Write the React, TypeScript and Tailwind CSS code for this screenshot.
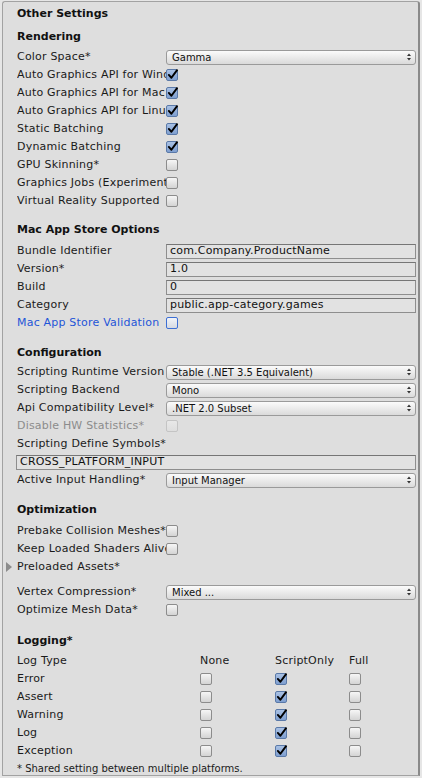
import React from "react";

const FONT = { fontFamily: '"DejaVu Sans", Verdana, sans-serif' };

function Check({ checked = false, tone = "normal" }: { checked?: boolean; tone?: "normal" | "link" | "disabled" }) {
  if (checked) {
    return (
      <span className="relative block h-[12px] w-[12px] shrink-0 rounded-[2px] border border-[#5a79a8] bg-gradient-to-b from-[#a9c1e4] to-[#7f9fd0]">
        <svg viewBox="0 0 12 12" className="absolute -left-px -top-[2px] h-[13px] w-[13px]">
          <path d="M2.6 6.4 L5 9 L10.2 2" fill="none" stroke="#000" strokeWidth="1.8" strokeLinecap="round" strokeLinejoin="round" />
        </svg>
      </span>
    );
  }
  const cls =
    tone === "link"
      ? "border-[#3d6fd4] from-[#f2f4f8] to-[#d6dae2]"
      : tone === "disabled"
        ? "border-[#c4c4c4] from-[#e8e8e8] to-[#dedede]"
        : "border-[#8c8c8c] from-[#f6f6f6] to-[#d4d4d4]";
  return <span className={`block h-[12px] w-[12px] shrink-0 rounded-[2px] border bg-gradient-to-b ${cls}`} />;
}

function Popup({ value }: { value: string }) {
  return (
    <div className="flex h-[15px] w-full items-center justify-between rounded-[3px] border border-[#9a9a9a] bg-gradient-to-b from-[#fbfbfb] to-[#dadada] pl-[5px] pr-[4px] text-[10px] text-[#111]">
      <span className="whitespace-nowrap">{value}</span>
      <svg viewBox="0 0 4 8" className="h-[8px] w-[4px]">
        <path d="M0 3 L2 0.5 L4 3 Z M0 5 L2 7.5 L4 5 Z" fill="#333" />
      </svg>
    </div>
  );
}

function Field({ value }: { value: string }) {
  return (
    <div className="flex h-[15px] w-full items-center border border-[#8e8e8e] border-t-[#767676] bg-[#e2e2e2] pl-[3px] text-[11px] tracking-[0.2px] text-[#111] whitespace-nowrap">
      {value}
    </div>
  );
}

function Row({ label, children, tone = "normal" }: { label: string; children?: React.ReactNode; tone?: "normal" | "link" | "disabled" }) {
  const color = tone === "link" ? "text-[#1f55d8]" : tone === "disabled" ? "text-[#8c8c8c]" : "text-[#1a1a1a]";
  return (
    <div className="flex h-[18px] items-center">
      <div className={`w-[149px] shrink-0 overflow-hidden whitespace-nowrap text-[11px] tracking-[0.2px] ${color}`}>{label}</div>
      <div className="flex flex-1 items-center">{children}</div>
    </div>
  );
}

function Header({ children, className = "" }: { children: React.ReactNode; className?: string }) {
  return <div className={`flex h-[18px] items-center text-[11px] font-bold text-[#111] ${className}`}>{children}</div>;
}

const LOG_ROWS = ["Error", "Assert", "Warning", "Log", "Exception"];

export default function App() {
  return (
    <div className="min-h-screen bg-[#e6e6e6] pl-[2px] pt-px" style={FONT}>
      <div className="h-[775px] w-[418px] rounded-t-[3px] border border-[#a2a2a2] border-r-2 border-r-[#8a8a8a] bg-[#dedede] pl-[14px] pr-[2px] pt-px">
        <Header className="mt-[2px]">Other Settings</Header>

        <Header className="mt-[5px]">Rendering</Header>
        <div className="mt-[2px]">
          <Row label="Color Space*"><Popup value="Gamma" /></Row>
          <Row label="Auto Graphics API for Windows"><Check checked /></Row>
          <Row label="Auto Graphics API for Mac"><Check checked /></Row>
          <Row label="Auto Graphics API for Linux"><Check checked /></Row>
          <Row label="Static Batching"><Check checked /></Row>
          <Row label="Dynamic Batching"><Check checked /></Row>
          <Row label="GPU Skinning*"><Check /></Row>
          <Row label="Graphics Jobs (Experimental)"><Check /></Row>
          <Row label="Virtual Reality Supported"><Check /></Row>
        </div>

        <Header className="mt-[11px]">Mac App Store Options</Header>
        <div className="mt-[3px]">
          <Row label="Bundle Identifier"><Field value="com.Company.ProductName" /></Row>
          <Row label="Version*"><Field value="1.0" /></Row>
          <Row label="Build"><Field value="0" /></Row>
          <Row label="Category"><Field value="public.app-category.games" /></Row>
          <Row label="Mac App Store Validation" tone="link"><Check tone="link" /></Row>
        </div>

        <Header className="mt-[12px]">Configuration</Header>
        <div className="mt-px">
          <Row label="Scripting Runtime Version"><Popup value="Stable (.NET 3.5 Equivalent)" /></Row>
          <Row label="Scripting Backend"><Popup value="Mono" /></Row>
          <Row label="Api Compatibility Level*"><Popup value=".NET 2.0 Subset" /></Row>
          <Row label="Disable HW Statistics*" tone="disabled"><Check tone="disabled" /></Row>
          <div className="flex h-[18px] items-center whitespace-nowrap text-[11px] tracking-[0.2px] text-[#1a1a1a]">Scripting Define Symbols*</div>
          <div className="-ml-px flex h-[18px] items-center">
            <Field value="CROSS_PLATFORM_INPUT" />
          </div>
          <Row label="Active Input Handling*"><Popup value="Input Manager" /></Row>
        </div>

        <Header className="mt-[12px]">Optimization</Header>
        <div className="mt-[3px]">
          <Row label="Prebake Collision Meshes*"><Check /></Row>
          <Row label="Keep Loaded Shaders Alive*"><Check /></Row>
          <div className="relative flex h-[18px] items-center text-[11px] tracking-[0.2px] text-[#1a1a1a]">
            <svg viewBox="0 0 6 10" className="absolute -left-[11px] top-[4px] h-[10px] w-[6px]">
              <path d="M0 0 L6 5 L0 10 Z" fill="#8c8c8c" />
            </svg>
            Preloaded Assets*
          </div>
        </div>
        <div className="mt-[7px]">
          <Row label="Vertex Compression*"><Popup value="Mixed ..." /></Row>
          <Row label="Optimize Mesh Data*"><Check /></Row>
        </div>

        <Header className="mt-[13px]">Logging*</Header>
        <div className="mt-[2px] text-[11px] tracking-[0.2px] text-[#1a1a1a]">
          <div className="flex h-[18px] items-center">
            <div className="w-[183px] shrink-0">Log Type</div>
            <div className="w-[75px] shrink-0">None</div>
            <div className="w-[74px] shrink-0">ScriptOnly</div>
            <div>Full</div>
          </div>
          {LOG_ROWS.map((r) => (
            <div key={r} className="flex h-[18px] items-center">
              <div className="w-[183px] shrink-0">{r}</div>
              <div className="w-[75px] shrink-0"><Check /></div>
              <div className="w-[74px] shrink-0"><Check checked /></div>
              <div><Check /></div>
            </div>
          ))}
          <div className="flex h-[16px] items-center text-[10px] tracking-normal">* Shared setting between multiple platforms.</div>
        </div>
      </div>
    </div>
  );
}
